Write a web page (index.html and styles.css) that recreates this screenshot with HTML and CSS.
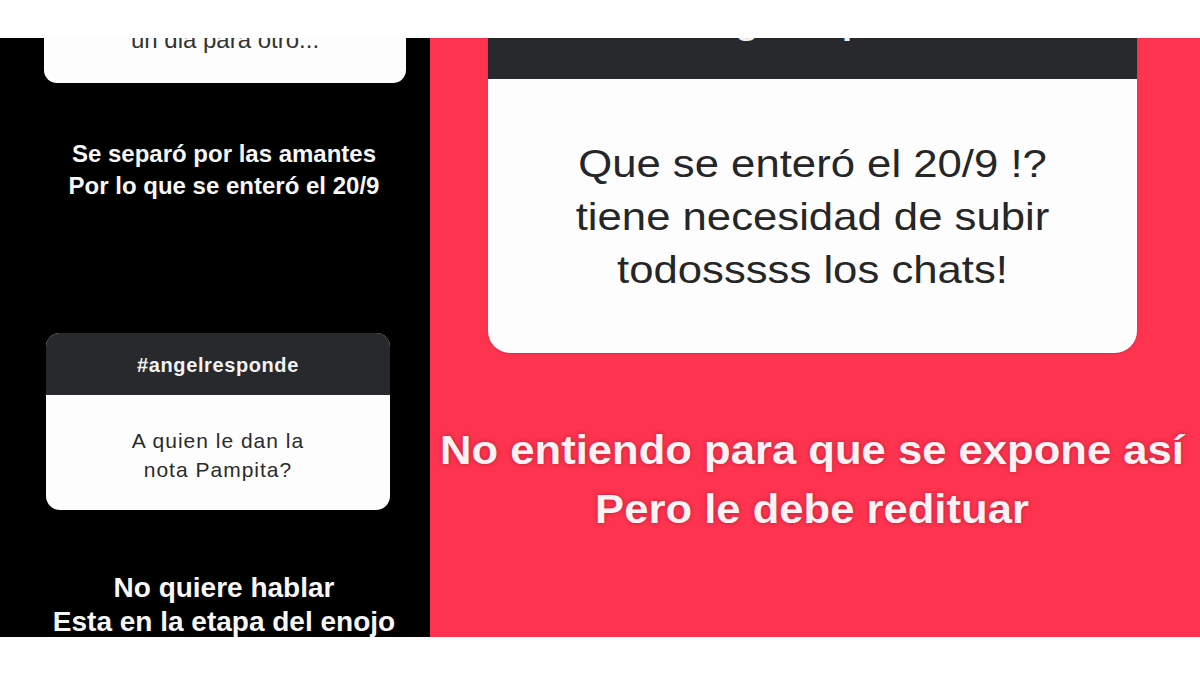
FILE: index.html
```html
<!DOCTYPE html>
<html lang="es">
<head>
<meta charset="utf-8">
<title>Historias</title>
<link rel="stylesheet" href="styles.css">
</head>
<body>
<div class="frame">
  <section class="panel panel-dark">
    <div class="card card-top">
      <div class="card-body body-top">un dia para otro...</div>
    </div>
    <p class="caption caption-one">Se separó por las amantes<br>Por lo que se enteró el 20/9</p>
    <div class="card card-q">
      <div class="card-head head-q">#angelresponde</div>
      <div class="card-body body-q">A quien le dan la<br>nota Pampita?</div>
    </div>
    <p class="caption caption-two">No quiere hablar<br>Esta en la etapa del enojo</p>
  </section>
  <section class="panel panel-red">
    <div class="card card-big">
      <div class="card-head head-big"><span class="stretch">#angelresponde</span></div>
      <div class="card-body body-big">
        <span class="stretch">Que se enteró el 20/9 !?</span>
        <span class="stretch">tiene necesidad de subir</span>
        <span class="stretch">todosssss los chats!</span>
      </div>
    </div>
    <p class="caption caption-red">
      <span class="stretch-bold">No entiendo para que se expone así</span>
      <span class="stretch-bold">Pero le debe redituar</span>
    </p>
  </section>
</div>
</body>
</html>
```
FILE: styles.css
```css
* { box-sizing: border-box; }
html, body { margin: 0; padding: 0; background: #ffffff; }
body { font-family: "Liberation Sans", Arial, sans-serif; }

.frame {
  margin-top: 38px;
  height: 599px;
  display: flex;
}

.panel {
  overflow: hidden;
  display: flex;
  flex-direction: column;
}

.panel-dark {
  width: 430px;
  background: #000000;
}

.panel-red {
  flex: 1;
  background: #fd3350;
}

.card {
  background: #fdfdfd;
  overflow: hidden;
  flex-shrink: 0;
}

.card-top {
  margin-top: -33px;
  margin-left: 44px;
  width: 362px;
  border-radius: 0 0 13px 13px;
}

.body-top {
  padding: 20px 0 28px;
  text-align: center;
  font-size: 24px;
  line-height: 30px;
  color: #333333;
}

.caption {
  margin: 0;
  text-align: center;
  font-weight: 700;
  color: #f7f7f7;
  text-shadow: 0 0 3px rgba(0, 0, 0, 0.35);
}

.caption-one {
  margin-top: 55px;
  padding-left: 18px;
  font-size: 24px;
  line-height: 32px;
}

.card-q {
  margin-top: 131px;
  margin-left: 46px;
  width: 344px;
  border-radius: 14px;
}

.card-head {
  background: #27292c;
  color: #f2f2f2;
  font-weight: 700;
  text-align: center;
}

.head-q {
  height: 62px;
  display: flex;
  align-items: center;
  justify-content: center;
  padding-top: 2px;
  font-size: 20px;
  letter-spacing: 0.6px;
}

.body-q {
  height: 115px;
  display: flex;
  align-items: center;
  justify-content: center;
  text-align: center;
  padding-top: 4px;
  font-size: 21px;
  line-height: 29px;
  letter-spacing: 1px;
  color: #2b2b2b;
}

.caption-two {
  margin-top: 61px;
  padding-left: 18px;
  font-size: 28px;
  line-height: 34px;
}

.card-big {
  margin-top: -59px;
  margin-left: 58px;
  width: 649px;
  border-radius: 0 0 22px 22px;
  box-shadow: 0 1px 2px rgba(0, 0, 0, 0.15);
}

.head-big {
  height: 100px;
  display: flex;
  align-items: flex-end;
  justify-content: center;
  padding-bottom: 34px;
  font-size: 30px;
  line-height: 40px;
}

.stretch {
  display: block;
  transform: scaleX(1.12);
  transform-origin: center;
}

.head-big .stretch { transform: scaleX(1.2); }

.body-big {
  padding: 58px 0 57px;
  text-align: center;
  font-size: 39px;
  line-height: 53px;
  color: #262626;
}

.caption-red {
  margin-top: 68px;
  padding-right: 6px;
  font-size: 40px;
  line-height: 59px;
  color: #fdf2f3;
  text-shadow: 0 0 4px rgba(120, 0, 20, 0.45);
}

.stretch-bold {
  display: block;
  transform: scaleX(1.09);
  transform-origin: center;
}
```
